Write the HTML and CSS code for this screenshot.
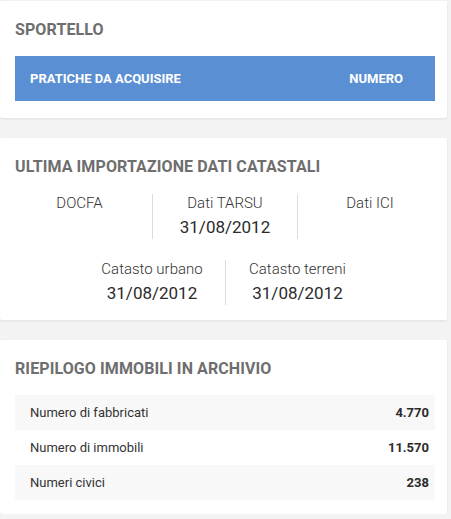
FILE: index.html
```html
<!DOCTYPE html>
<html lang="it">
<head>
<meta charset="utf-8">
<title>Dashboard</title>
<link rel="stylesheet" href="styles.css">
</head>
<body>
<div class="page">
  <section class="card card-sportello">
    <h2 class="card-title">SPORTELLO</h2>
    <div class="table-head">
      <span class="th-main">PRATICHE DA ACQUISIRE</span>
      <span class="th-num">NUMERO</span>
    </div>
  </section>

  <section class="card card-import">
    <h2 class="card-title">ULTIMA IMPORTAZIONE DATI CATASTALI</h2>
    <div class="stat-row">
      <div class="stat">
        <div class="stat-label">DOCFA</div>
      </div>
      <div class="stat">
        <div class="stat-label">Dati TARSU</div>
        <div class="stat-date">31/08/2012</div>
      </div>
      <div class="stat">
        <div class="stat-label">Dati ICI</div>
      </div>
    </div>
    <div class="stat-row stat-row-second">
      <div class="stat">
        <div class="stat-label">Catasto urbano</div>
        <div class="stat-date">31/08/2012</div>
      </div>
      <div class="stat">
        <div class="stat-label">Catasto terreni</div>
        <div class="stat-date">31/08/2012</div>
      </div>
    </div>
  </section>

  <section class="card card-summary">
    <h2 class="card-title">RIEPILOGO IMMOBILI IN ARCHIVIO</h2>
    <div class="summary">
      <div class="summary-row">
        <span class="summary-label">Numero di fabbricati</span>
        <span class="summary-value">4.770</span>
      </div>
      <div class="summary-row">
        <span class="summary-label">Numero di immobili</span>
        <span class="summary-value">11.570</span>
      </div>
      <div class="summary-row">
        <span class="summary-label">Numeri civici</span>
        <span class="summary-value">238</span>
      </div>
    </div>
  </section>
</div>
</body>
</html>
```

FILE: styles.css
```css
* {
  box-sizing: border-box;
}

html,
body {
  margin: 0;
  padding: 0;
  background: #f3f3f3;
}

body {
  font-family: Roboto, "Liberation Sans", Arial, sans-serif;
  color: #333;
}

.page {
  display: flex;
  flex-direction: column;
  gap: 20px;
  width: 447px;
  padding-top: 1px;
}

.card {
  background: #fff;
  padding: 15px 12px 15px 15px;
  box-shadow: 0 1px 3px rgba(0, 0, 0, 0.08);
  border-radius: 2px;
}

.card-title {
  margin: 2px 0 14px;
  font-size: 16px;
  line-height: 24px;
  font-weight: 700;
  letter-spacing: 0.1px;
  color: #6e6e6e;
}

.card-sportello {
  padding-bottom: 17px;
}

.table-head {
  display: flex;
  align-items: center;
  justify-content: space-between;
  height: 45px;
  padding: 0 32px 0 15px;
  background: #5b8fd4;
  color: #fff;
  font-size: 13px;
  font-weight: 700;
}

/* Import card */
.card-import .card-title {
  margin-bottom: 15px;
}

.stat-row {
  display: flex;
  justify-content: center;
  margin: 0 -7px 0 -8px;
}

.stat-row-second {
  margin-top: 21px;
}

.stat {
  width: 145px;
  text-align: center;
}

.stat + .stat {
  border-left: 1px solid #dcdcdc;
}

.stat-label {
  font-size: 15px;
  line-height: 18px;
  font-weight: 300;
  color: #333;
}

.stat-date {
  margin-top: 3px;
  font-size: 17px;
  line-height: 24px;
  font-weight: 400;
  color: #2b2b2b;
}

/* Summary card */
.card-summary {
  padding-bottom: 14px;
}

.summary-row {
  display: flex;
  justify-content: space-between;
  height: 35px;
  line-height: 35px;
  padding: 0 6px 0 15px;
  font-size: 13px;
}

.summary-row:nth-child(odd) {
  background: #f8f8f8;
}

.summary-label {
  color: #333;
}

.summary-value {
  font-weight: 700;
  color: #2b2b2b;
}
```
